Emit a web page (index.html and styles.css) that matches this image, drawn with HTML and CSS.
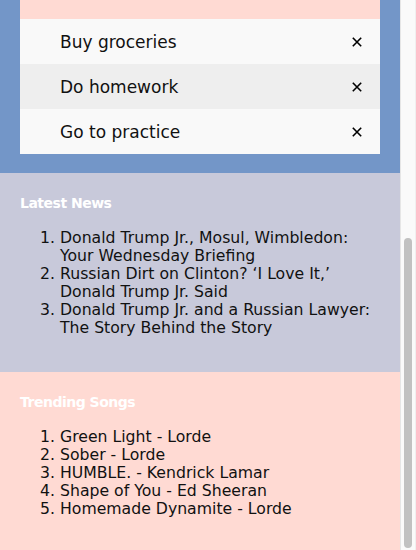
FILE: index.html
```html
<!DOCTYPE html>
<html lang="en">
<head>
<meta charset="utf-8">
<title>Todo</title>
<link rel="stylesheet" href="styles.css">
</head>
<body>
<div class="viewport">
  <div class="page">
    <section class="todo">
      <div class="card">
        <div class="card-head"></div>
        <ul class="todo-list">
          <li class="todo-item">
            <span class="todo-text">Buy groceries</span>
            <span class="todo-remove"><svg width="10" height="10" viewBox="0 0 10 10"><path d="M0.8 0.8 L9.2 9.2 M9.2 0.8 L0.8 9.2" stroke="#000" stroke-width="1.6" fill="none"/></svg></span>
          </li>
          <li class="todo-item alt">
            <span class="todo-text">Do homework</span>
            <span class="todo-remove"><svg width="10" height="10" viewBox="0 0 10 10"><path d="M0.8 0.8 L9.2 9.2 M9.2 0.8 L0.8 9.2" stroke="#000" stroke-width="1.6" fill="none"/></svg></span>
          </li>
          <li class="todo-item">
            <span class="todo-text">Go to practice</span>
            <span class="todo-remove"><svg width="10" height="10" viewBox="0 0 10 10"><path d="M0.8 0.8 L9.2 9.2 M9.2 0.8 L0.8 9.2" stroke="#000" stroke-width="1.6" fill="none"/></svg></span>
          </li>
        </ul>
      </div>
    </section>
    <section class="panel news">
      <h2 class="panel-title">Latest News</h2>
      <ol class="panel-list">
        <li>Donald Trump Jr., Mosul, Wimbledon: Your Wednesday Briefing</li>
        <li>Russian Dirt on Clinton? ‘I Love It,’ Donald Trump Jr. Said</li>
        <li>Donald Trump Jr. and a Russian Lawyer: The Story Behind the Story</li>
      </ol>
    </section>
    <section class="panel songs">
      <h2 class="panel-title">Trending Songs</h2>
      <ol class="panel-list">
        <li>Green Light - Lorde</li>
        <li>Sober - Lorde</li>
        <li>HUMBLE. - Kendrick Lamar</li>
        <li>Shape of You - Ed Sheeran</li>
        <li>Homemade Dynamite - Lorde</li>
      </ol>
    </section>
  </div>
</div>
<div class="scrollbar" aria-hidden="true"><div class="scroll-thumb"></div></div>
</body>
</html>
```
FILE: styles.css
```css
html, body {
  margin: 0;
  padding: 0;
}
body {
  font-family: "DejaVu Sans", Verdana, sans-serif;
  color: #111;
  display: flex;
  height: 100vh;
  overflow: hidden;
}
.viewport {
  width: 400px;
  flex: none;
  height: 100%;
  overflow: hidden;
  display: flex;
  flex-direction: column;
  justify-content: flex-end;
}
.page {
  flex: none;
  margin-bottom: -3px;
}
.scrollbar {
  box-sizing: border-box;
  width: 16px;
  flex: none;
  height: 100%;
  background: #fafafa;
  border-left: 1px solid #e6e6e6;
  border-right: 1px solid #f0f0f0;
  padding-top: 238px;
}
.scroll-thumb {
  width: 8px;
  height: 310px;
  margin-left: 3px;
  border-radius: 4px;
  background: #c1c1c1;
}
.todo {
  background: #7396c8;
  padding: 20px 20px 19px;
}
.card {
  background: #fafafa;
}
.card-head {
  background: #ffdad3;
  height: 428px;
}
.todo-list {
  list-style: none;
  margin: 0;
  padding: 0;
}
.todo-item {
  height: 45px;
  display: flex;
  align-items: center;
  justify-content: space-between;
  padding: 0 18px 0 40px;
  background: #f9f9f9;
  font-size: 17px;
}
.todo-item.alt {
  background: #eeeeee;
}
.todo-remove {
  display: flex;
  width: 10px;
  height: 10px;
}
.panel {
  padding: 20px;
}
.news {
  background: #c8c9da;
}
.songs {
  background: #ffdad3;
}
.panel-title {
  margin: 0;
  font-size: 14px;
  letter-spacing: -0.5px;
  line-height: 20px;
  color: #fff;
  font-weight: bold;
}
.panel-list {
  margin: 16px 0 15px;
  padding-left: 40px;
  font-size: 15.7px;
  line-height: 18px;
}
```
